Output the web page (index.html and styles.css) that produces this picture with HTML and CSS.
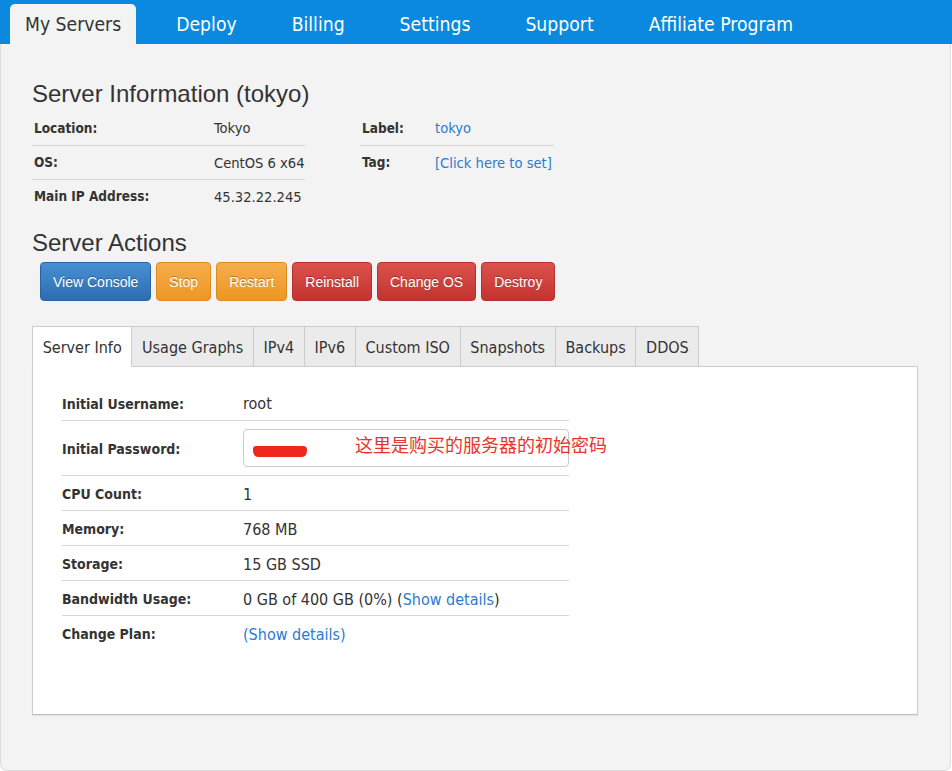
FILE: index.html
```html
<!DOCTYPE html>
<html>
<head>
<meta charset="utf-8">
<title>Server Information</title>
<link rel="stylesheet" href="styles.css">
</head>
<body>
<nav class="nav">
  <a class="nav-item active">My Servers</a>
  <a class="nav-item">Deploy</a>
  <a class="nav-item">Billing</a>
  <a class="nav-item">Settings</a>
  <a class="nav-item">Support</a>
  <a class="nav-item">Affiliate Program</a>
</nav>
<main class="main">
  <h2 class="heading">Server Information (tokyo)</h2>
  <div class="info">
    <table class="kv kv-left">
      <tr><th>Location:</th><td>Tokyo</td></tr>
      <tr><th>OS:</th><td>CentOS 6 x64</td></tr>
      <tr><th>Main IP Address:</th><td>45.32.22.245</td></tr>
    </table>
    <table class="kv kv-right">
      <tr><th>Label:</th><td><a class="link">tokyo</a></td></tr>
      <tr><th>Tag:</th><td><a class="link">[Click here to set]</a></td></tr>
    </table>
  </div>
  <h2 class="heading heading-actions">Server Actions</h2>
  <div class="actions">
    <button class="btn btn-blue">View Console</button>
    <button class="btn btn-orange">Stop</button>
    <button class="btn btn-orange">Restart</button>
    <button class="btn btn-red">Reinstall</button>
    <button class="btn btn-red">Change OS</button>
    <button class="btn btn-red">Destroy</button>
  </div>
  <div class="tabs">
    <div class="tab active">Server Info</div>
    <div class="tab">Usage Graphs</div>
    <div class="tab">IPv4</div>
    <div class="tab">IPv6</div>
    <div class="tab">Custom ISO</div>
    <div class="tab">Snapshots</div>
    <div class="tab">Backups</div>
    <div class="tab">DDOS</div>
  </div>
  <div class="panel">
    <table class="details">
      <tr><th>Initial Username:</th><td>root</td></tr>
      <tr class="pw-row"><th>Initial Password:</th><td>
        <div class="pw-box"><span class="scribble"></span><span class="note">这里是购买的服务器的初始密码</span></div>
      </td></tr>
      <tr><th>CPU Count:</th><td>1</td></tr>
      <tr><th>Memory:</th><td>768 MB</td></tr>
      <tr><th>Storage:</th><td>15 GB SSD</td></tr>
      <tr><th>Bandwidth Usage:</th><td>0 GB of 400 GB (0%) (<a class="link">Show details</a>)</td></tr>
      <tr><th>Change Plan:</th><td><a class="link">(Show details)</a></td></tr>
    </table>
  </div>
</main>
</body>
</html>
```
FILE: styles.css
```css
* { box-sizing: border-box; }
html, body { margin: 0; padding: 0; background: #ffffff; }
body {
  font-family: "DejaVu Sans Condensed", "DejaVu Sans", sans-serif;
  font-stretch: condensed;
  color: #333333;
}

.nav {
  height: 44px;
  background: #0a89de;
  display: flex;
  align-items: flex-end;
  gap: 25px;
  padding-left: 10px;
}
.nav-item {
  height: 40px;
  line-height: 41px;
  padding: 0 15px;
  font-size: 19.2px;
  color: #ffffff;
  white-space: nowrap;
}
.nav-item.active {
  background: #f3f3f3;
  color: #333333;
  border-radius: 5px 5px 0 0;
}

.main {
  width: 951px;
  background: #f3f3f3;
  border: 1px solid #dcdcdc;
  border-top: none;
  border-radius: 0 0 7px 7px;
  padding: 35px 31px 55px 31px;
}

.heading {
  margin: 0;
  font-family: "Liberation Sans", Arial, sans-serif;
  font-stretch: normal;
  font-weight: normal;
  font-size: 24px;
  line-height: 30px;
  color: #333333;
}
.heading-actions { margin-top: 15px; }

.info {
  display: flex;
  align-items: flex-start;
  gap: 55px;
  margin-top: 2px;
}
.kv { border-collapse: collapse; table-layout: fixed; }
.kv th, .kv td {
  height: 34px;
  padding: 0 0 0 2px;
  text-align: left;
  vertical-align: middle;
  border-bottom: 1px solid #d6d6d6;
  white-space: nowrap;
}
.kv tr:last-child th, .kv tr:last-child td { border-bottom: none; }
.kv th { font-size: 13.5px; font-weight: bold; }
.kv td { font-size: 14.6px; }
.kv-left { width: 273px; }
.kv-left th { width: 180px; }
.kv-right { width: 194px; }
.kv-right th { width: 73px; }

.link { color: #2a7bd3; text-decoration: none; }

.actions {
  display: flex;
  gap: 5px;
  margin-top: 4px;
  padding-left: 8px;
}
.btn {
  height: 39px;
  padding: 0 12px;
  font-family: "Liberation Sans", Arial, sans-serif;
  font-size: 14px;
  color: #ffffff;
  border-radius: 4px;
  text-shadow: 0 -1px 0 rgba(0,0,0,0.3);
  cursor: pointer;
}
.btn-blue {
  background: linear-gradient(#4790d2, #2d6db0);
  border: 1px solid #2a64a2;
}
.btn-orange {
  background: linear-gradient(#f5ae4c, #ee9622);
  border: 1px solid #df8b1c;
}
.btn-red {
  background: linear-gradient(#dc514c, #c3332f);
  border: 1px solid #b3302c;
}

.tabs {
  display: flex;
  margin-top: 25px;
  position: relative;
  z-index: 1;
}
.tab {
  height: 41px;
  line-height: 41px;
  padding: 0 9.7px;
  font-size: 16px;
  color: #333333;
  background: #ebebeb;
  border: 1px solid #cccccc;
  border-left: none;
  white-space: nowrap;
}
.tab:first-child { border-left: 1px solid #cccccc; }
.tab.active {
  background: #ffffff;
  border-bottom-color: #ffffff;
}

.panel {
  margin-top: -1px;
  width: 886px;
  height: 349px;
  background: #ffffff;
  border: 1px solid #cccccc;
  border-bottom-color: #bdbdbd;
  box-shadow: 0 1px 1px rgba(0,0,0,0.06);
  padding: 18px 29px 0 29px;
}

.details { border-collapse: collapse; table-layout: fixed; width: 507px; }
.details th, .details td {
  height: 35px;
  padding: 3px 0 0 0;
  text-align: left;
  vertical-align: middle;
  border-bottom: 1px solid #d6d6d6;
  white-space: nowrap;
}
.details tr:last-child th, .details tr:last-child td { border-bottom: none; }
.details th { width: 181px; font-size: 14px; font-weight: bold; }
.details td { font-size: 16px; }
.pw-row th { height: 55px; }
.pw-row td { height: 55px; padding-top: 0; }

.pw-box {
  height: 38px;
  border: 1px solid #cccccc;
  border-radius: 4px;
  background: #ffffff;
  display: flex;
  align-items: center;
  padding-left: 9px;
  white-space: nowrap;
}
.scribble {
  flex: 0 0 54px;
  display: inline-block;
  width: 54px;
  height: 11px;
  margin-top: 7px;
  background: #f0271d;
  border-radius: 3px 4px 5px 5px / 3px 4px 6px 6px;
}
.note {
  flex: 0 0 auto;
  margin-left: 48px;
  margin-top: -8px;
  font-family: "Noto Sans CJK SC", sans-serif;
  font-stretch: normal;
  font-size: 18px;
  color: #e8342b;
}
```
